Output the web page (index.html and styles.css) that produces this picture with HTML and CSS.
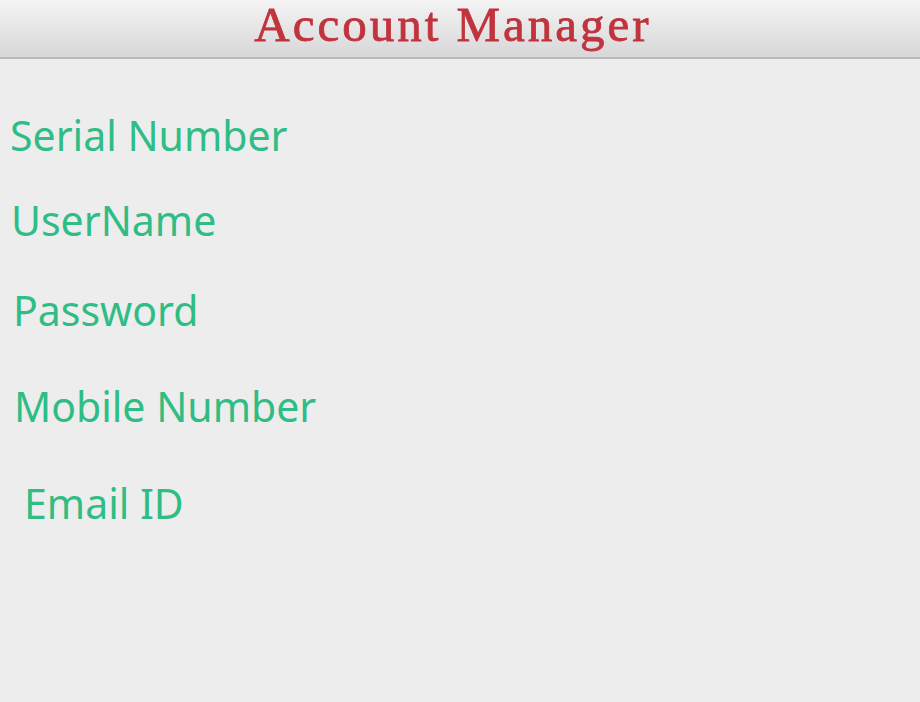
FILE: index.html
```html
<!DOCTYPE html>
<html>
<head>
<meta charset="utf-8">
<link rel="stylesheet" href="styles.css">
</head>
<body>
<header class="topbar">
  <h1 class="title">Account Manager</h1>
</header>
<main class="fields">
  <div class="field f-serial">Serial Number</div>
  <div class="field f-user">UserName</div>
  <div class="field f-pass">Password</div>
  <div class="field f-mobile">Mobile Number</div>
  <div class="field f-email">Email ID</div>
</main>
</body>
</html>
```
FILE: styles.css
```css
html, body {
  margin: 0;
  padding: 0;
  width: 920px;
  height: 702px;
  background: #ededed;
  overflow: hidden;
}
.topbar {
  height: 59px;
  box-sizing: border-box;
  background: linear-gradient(to bottom, #f4f4f4 0%, #e7e7e8 45%, #d7d6d9 100%);
  border-bottom: 2px solid #b9b9b9;
  display: flex;
  justify-content: center;
  align-items: flex-start;
}
.title {
  margin: 0;
  padding-right: 14px;
  font-family: "Liberation Serif", serif;
  font-weight: normal;
  font-size: 49px;
  line-height: 49px;
  color: #c1333d;
  letter-spacing: 3px;
  -webkit-text-stroke: 0.8px #c1333d;
}
.fields {
  display: flex;
  flex-direction: column;
  align-items: flex-start;
}
.field {
  font-family: "Noto Sans", sans-serif;
  font-size: 41px;
  line-height: 40px;
  color: #2fbd85;
}
.f-serial { margin: 56px 0 0 10px; }
.f-user { margin: 45px 0 0 11px; }
.f-pass { margin: 50px 0 0 13px; }
.f-mobile { margin: 56px 0 0 14px; }
.f-email { margin: 57px 0 0 24px; }
```
